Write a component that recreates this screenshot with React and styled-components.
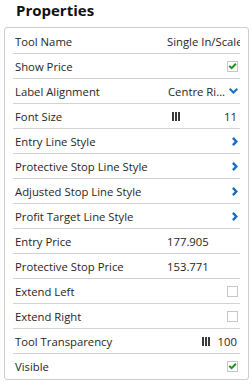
import styled, { createGlobalStyle } from "styled-components";

const GlobalStyle = createGlobalStyle`
  html, body {
    margin: 0;
    padding: 0;
    background: #ffffff;
  }
  body {
    font-family: "Open Sans", "DejaVu Sans", sans-serif;
  }
`;

const rows = [
  { label: "Tool Name", type: "text", value: "Single In/Scale" },
  { label: "Show Price", type: "check", checked: true },
  { label: "Label Alignment", type: "select", value: "Centre Right" },
  { label: "Font Size", type: "slider", value: "11", spread: true },
  { label: "Entry Line Style", type: "link" },
  { label: "Protective Stop Line Style", type: "link" },
  { label: "Adjusted Stop Line Style", type: "link" },
  { label: "Profit Target Line Style", type: "link" },
  { label: "Entry Price", type: "text", value: "177.905" },
  { label: "Protective Stop Price", type: "text", value: "153.771" },
  { label: "Extend Left", type: "check", checked: false },
  { label: "Extend Right", type: "check", checked: false },
  { label: "Tool Transparency", type: "slider", value: "100" },
  { label: "Visible", type: "check", checked: true },
];

const CheckMark = () => (
  <svg width="10" height="9" viewBox="0 0 10 9">
    <path d="M0.5 4.6 L2.2 3 L4 4.8 L8 0.6 L9.6 2.2 L4 7.8 Z" fill="#1e9420" />
  </svg>
);

const ChevronDown = () => (
  <svg width="9" height="6" viewBox="0 0 9 6">
    <path d="M0 1.4 L1.4 0 L4.5 3.1 L7.6 0 L9 1.4 L4.5 5.9 Z" fill="#1b6ec2" />
  </svg>
);

const ChevronRight = () => (
  <svg width="6" height="9" viewBox="0 0 6 9">
    <path d="M1.8 0 L0 1.8 L2.7 4.5 L0 7.2 L1.8 9 L6 4.5 Z" fill="#1b6ec2" />
  </svg>
);

const Value = ({ row }) => {
  switch (row.type) {
    case "check":
      return (
        <End>
          <Box>{row.checked && <CheckMark />}</Box>
        </End>
      );
    case "select":
      return (
        <End $tight>
          <Ellipsis>{row.value}</Ellipsis>
          <ChevronDown />
        </End>
      );
    case "slider":
      return (
        <Slider $spread={row.spread}>
          <Grip>
            <i />
            <i />
            <i />
          </Grip>
          <span>{row.value}</span>
        </Slider>
      );
    case "link":
      return (
        <End>
          <ChevronRight />
        </End>
      );
    default:
      return <Plain>{row.value}</Plain>;
  }
};

const App = () => {
  return (
    <Page>
      <GlobalStyle />
      <Title>Properties</Title>
      <Panel>
        {rows.map((row) => (
          <Row key={row.label}>
            <Label>{row.label}</Label>
            <Value row={row} />
          </Row>
        ))}
      </Panel>
    </Page>
  );
};

export default App;

const Page = styled.div`
  width: 251px;
  height: 384px;
  box-sizing: border-box;
  padding: 0 2px 0 4px;
  overflow: hidden;
`;

const Title = styled.h2`
  margin: 0;
  padding: 0 0 0 12px;
  height: 27px;
  line-height: 20px;
  font-size: 15px;
  font-weight: 700;
  color: #111111;
`;

const Panel = styled.div`
  border: 1px solid #cdcdcd;
  border-radius: 3px;
  padding: 1px 8px 0 8px;
  background: #ffffff;
`;

const Row = styled.div`
  display: grid;
  grid-template-columns: 154px 1fr;
  align-items: center;
  height: 25px;
  box-sizing: border-box;
  border-bottom: 1px solid #d2d2d2;
  font-size: 11.3px;
  color: #262626;

  &:last-child {
    border-bottom: none;
  }
`;

const Label = styled.div`
  padding-left: 2px;
  white-space: nowrap;
  overflow: hidden;
`;

const Plain = styled.div`
  white-space: nowrap;
  overflow: hidden;
`;

const End = styled.div`
  display: flex;
  align-items: center;
  justify-content: flex-end;
  gap: ${(p) => (p.$tight ? "2px" : "4px")};
  padding-right: 2px;
  min-width: 0;
`;

const Ellipsis = styled.span`
  flex: 1;
  min-width: 0;
  padding-left: 1px;
  white-space: nowrap;
  overflow: hidden;
  text-overflow: ellipsis;
`;

const Box = styled.div`
  width: 11px;
  height: 11px;
  box-sizing: border-box;
  border: 1px solid #c6c6c6;
  background: #ffffff;
  display: flex;
  align-items: center;
  justify-content: center;
`;

const Slider = styled.div`
  display: flex;
  align-items: center;
  justify-content: ${(p) => (p.$spread ? "space-between" : "flex-end")};
  gap: 8px;
  padding: 0 3px 0 5px;
`;

const Grip = styled.div`
  display: flex;
  gap: 1px;
  height: 9px;

  i {
    display: block;
    width: 2px;
    height: 9px;
    background: #3a3a3a;
  }
`;
